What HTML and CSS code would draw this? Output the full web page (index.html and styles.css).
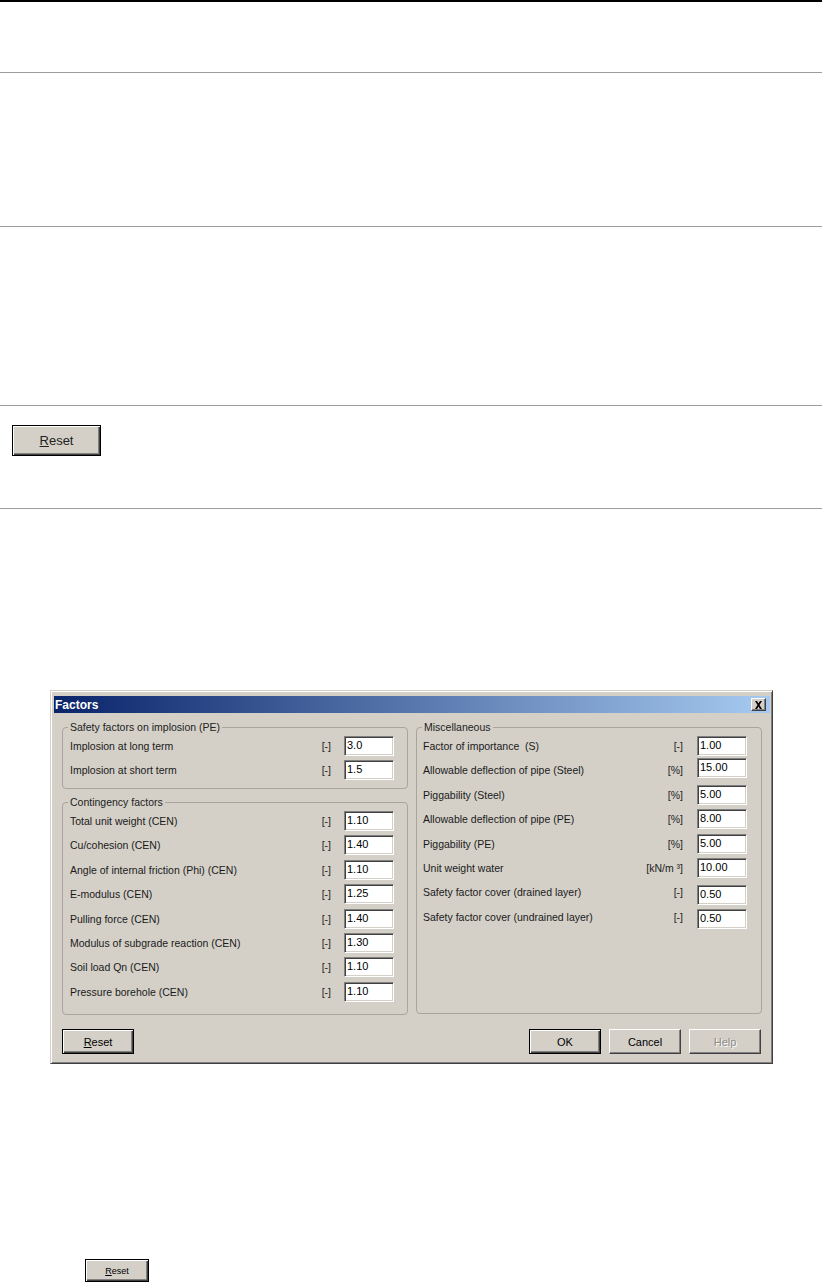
FILE: index.html
```html
<!DOCTYPE html>
<html>
<head>
    <title>Factors</title>
    <link rel="stylesheet" href="styles.css">
</head>
<body>
    <div class="doc">
        <div class="doc-row r1"></div>
        <div class="doc-row r2"></div>
        <div class="doc-row r3"></div>
        <div class="doc-row r4">
            <button class="btn btn-default btn-large"><u>R</u>eset</button>
        </div>
    </div>

    <div class="dialog">
        <div class="titlebar">
            <span class="title">Factors</span>
            <span class="close">
                <svg width="9" height="8" viewBox="0 0 9 8">
                    <path d="M1 0h2l1.5 2.5L6 0h2L5.5 4 8 8H6L4.5 5.5 3 8H1l2.5-4z" fill="#000"/>
                </svg>
            </span>
        </div>

        <div class="dialog-body">
            <div class="col">
                <div class="group g-implosion">
                    <span class="legend">Safety factors on implosion (PE)</span>
                    <div class="field"><span class="lbl">Implosion at long term</span><span class="unit">[-]</span><span class="input">3.0</span></div>
                    <div class="field"><span class="lbl">Implosion at short term</span><span class="unit">[-]</span><span class="input">1.5</span></div>
                </div>
                <div class="group g-contingency">
                    <span class="legend">Contingency factors</span>
                    <div class="field"><span class="lbl">Total unit weight (CEN)</span><span class="unit">[-]</span><span class="input">1.10</span></div>
                    <div class="field"><span class="lbl">Cu/cohesion (CEN)</span><span class="unit">[-]</span><span class="input">1.40</span></div>
                    <div class="field"><span class="lbl">Angle of internal friction (Phi) (CEN)</span><span class="unit">[-]</span><span class="input">1.10</span></div>
                    <div class="field"><span class="lbl">E-modulus (CEN)</span><span class="unit">[-]</span><span class="input">1.25</span></div>
                    <div class="field"><span class="lbl">Pulling force (CEN)</span><span class="unit">[-]</span><span class="input">1.40</span></div>
                    <div class="field"><span class="lbl">Modulus of subgrade reaction (CEN)</span><span class="unit">[-]</span><span class="input">1.30</span></div>
                    <div class="field"><span class="lbl">Soil load Qn (CEN)</span><span class="unit">[-]</span><span class="input">1.10</span></div>
                    <div class="field"><span class="lbl">Pressure borehole (CEN)</span><span class="unit">[-]</span><span class="input">1.10</span></div>
                </div>
            </div>
            <div class="col">
                <div class="group g-misc">
                    <span class="legend">Miscellaneous</span>
                    <div class="field"><span class="lbl">Factor of importance &nbsp;(S)</span><span class="unit">[-]</span><span class="input">1.00</span></div>
                    <div class="field"><span class="lbl">Allowable deflection of pipe (Steel)</span><span class="unit">[%]</span><span class="input up">15.00</span></div>
                    <div class="field"><span class="lbl">Piggability (Steel)</span><span class="unit">[%]</span><span class="input">5.00</span></div>
                    <div class="field"><span class="lbl">Allowable deflection of pipe (PE)</span><span class="unit">[%]</span><span class="input">8.00</span></div>
                    <div class="field"><span class="lbl">Piggability (PE)</span><span class="unit">[%]</span><span class="input">5.00</span></div>
                    <div class="field"><span class="lbl">Unit weight water</span><span class="unit">[kN/m ³]</span><span class="input">10.00</span></div>
                    <div class="field"><span class="lbl">Safety factor cover (drained layer)</span><span class="unit">[-]</span><span class="input down">0.50</span></div>
                    <div class="field"><span class="lbl">Safety factor cover (undrained layer)</span><span class="unit">[-]</span><span class="input down">0.50</span></div>
                </div>
            </div>
        </div>

        <div class="dialog-buttons">
            <button class="btn btn-default"><u>R</u>eset</button>
            <div class="spacer"></div>
            <button class="btn btn-default">OK</button>
            <button class="btn">Cancel</button>
            <button class="btn btn-disabled">Help</button>
        </div>
    </div>

    <div class="foot">
        <button class="btn btn-default btn-small"><u>R</u>eset</button>
    </div>
</body>
</html>
```

FILE: styles.css
```css
body {
    margin: 0;
    background: #fff;
    font-family: "Liberation Sans", Arial, sans-serif;
    color: #000;
}

/* document table rows */
.doc {
    border-top: 2px solid #000;
}
.doc-row {
    border-bottom: 1px solid #9c9c9c;
    box-sizing: border-box;
}
.r1 { height: 71px; }
.r2 { height: 154px; }
.r3 { height: 179px; }
.r4 {
    height: 103px;
    padding: 19px 0 0 12px;
}

/* classic buttons */
.btn {
    display: block;
    box-sizing: border-box;
    width: 72px;
    height: 25px;
    padding: 0;
    background: #d4d0c8;
    font-family: "Liberation Sans", Arial, sans-serif;
    font-size: 11px;
    color: #000;
    border: 1px solid;
    border-color: #fff #404040 #404040 #fff;
    box-shadow: inset -1px -1px 0 #808080;
}
.btn u {
    text-decoration: underline;
}
.btn-default {
    border: 1px solid #000;
    box-shadow: inset 1px 1px 0 #fff, inset -1px -1px 0 #404040, inset -2px -2px 0 #808080;
}
.btn-disabled {
    color: #8c8a85;
    text-shadow: 1px 1px 0 #fff;
}
.btn-large {
    width: 89px;
    height: 31px;
    font-size: 13px;
    color: #222;
}
.btn-small {
    width: 64px;
    height: 23px;
    font-size: 9px;
}

/* dialog window */
.dialog {
    box-sizing: border-box;
    width: 723px;
    height: 374px;
    margin: 181px 0 0 50px;
    padding: 5px 2px 0 3px;
    background: #d4d0c8;
    border: 1px solid;
    border-color: #d4d0c8 #404040 #404040 #d4d0c8;
    box-shadow: inset 1px 1px 0 #fff, inset -1px -1px 0 #808080;
}
.titlebar {
    display: flex;
    align-items: center;
    justify-content: space-between;
    height: 17px;
    padding: 0 4px 0 1px;
    background: linear-gradient(to right, #0a246a, #a6caf0);
}
.title {
    color: #fff;
    font-weight: bold;
    font-size: 12px;
}
.close {
    display: flex;
    align-items: center;
    justify-content: center;
    box-sizing: border-box;
    width: 15px;
    height: 13px;
    background: #d4d0c8;
    border: 1px solid;
    border-color: #fff #404040 #404040 #fff;
    box-shadow: inset -1px -1px 0 #808080;
}

.dialog-body {
    display: flex;
    gap: 8px;
    padding: 14px 0 0 8px;
}
.col {
    display: flex;
    flex-direction: column;
    gap: 13px;
    width: 346px;
}

/* group boxes */
.group {
    position: relative;
    box-sizing: border-box;
    border: 1px solid #a9a59e;
    border-radius: 4px;
    padding: 8px 13px 0 7px;
    display: flex;
    flex-direction: column;
    gap: 4.4px;
    font-size: 10.5px;
}
.g-implosion { height: 62px; }
.g-contingency { height: 213px; }
.g-misc {
    height: 287px;
    padding-left: 6px;
    padding-right: 14px;
}
.legend {
    position: absolute;
    top: -7px;
    left: 5px;
    padding: 0 2px 0 2px;
    background: #d4d0c8;
    color: #222;
    line-height: 12px;
}

.field {
    display: flex;
    align-items: center;
    height: 20px;
}
.lbl {
    flex: 1;
    color: #1a1a1a;
    white-space: nowrap;
}
.unit {
    margin-right: 13px;
    color: #222;
}
.g-misc .unit {
    margin-right: 14px;
}
.input {
    box-sizing: border-box;
    width: 50px;
    height: 20px;
    padding: 1px 0 0 2px;
    background: #fff;
    border: 1px solid;
    border-color: #808080 #fff #fff #808080;
    box-shadow: inset 1px 1px 0 #404040, inset -1px -1px 0 #d4d0c8;
    font-size: 11px;
    line-height: 14px;
}
.input.up { margin-top: -4px; }
.input.down { margin-top: 5px; }

.dialog-buttons {
    display: flex;
    gap: 8px;
    padding: 14px 0 0 8px;
    width: 699px;
}
.spacer { flex: 1; }

.foot {
    padding: 195px 0 0 85px;
}
```
